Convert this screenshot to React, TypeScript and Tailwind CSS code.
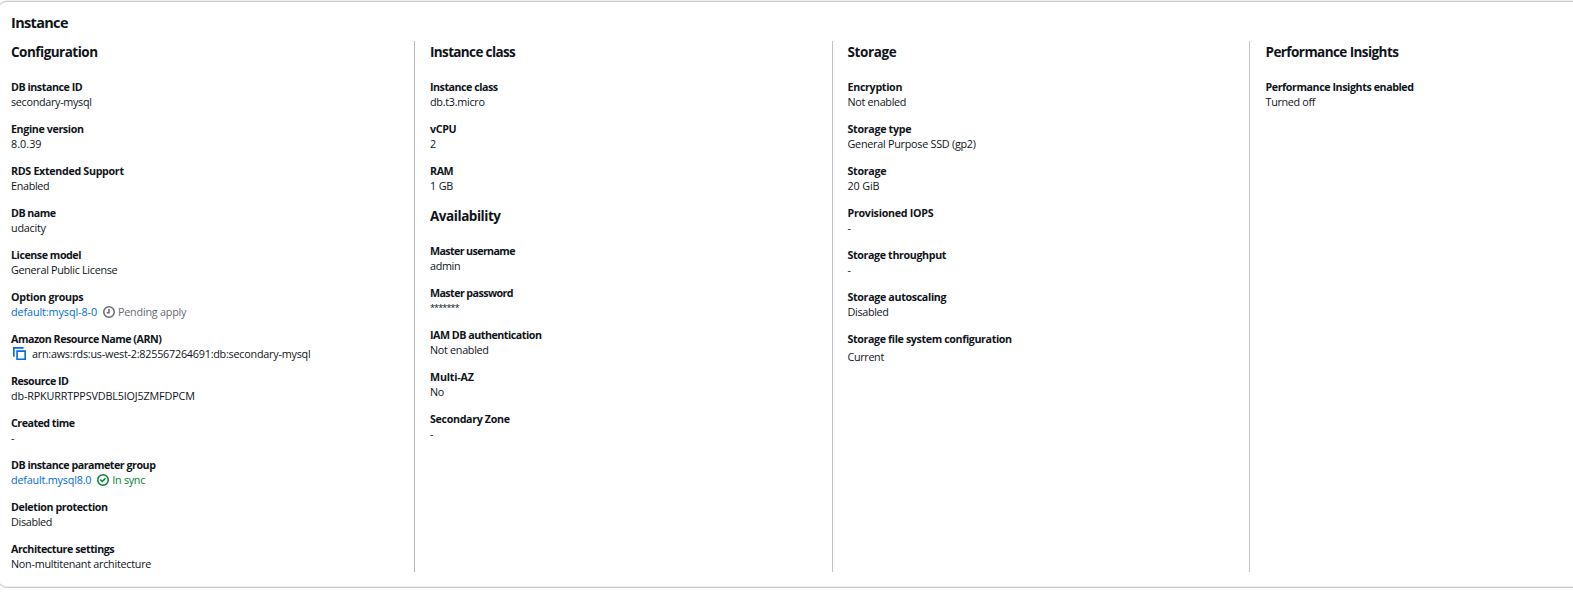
import type { ReactNode } from "react";

type FieldProps = { label: string; labelClass?: string; valueClass?: string; children: ReactNode };

function Field({ label, labelClass = "", valueClass = "", children }: FieldProps) {
  return (
    <div>
      <dt className={`h-[15px] text-[10.7px] leading-[17px] font-bold whitespace-nowrap text-[#0f141a] ${labelClass}`}>{label}</dt>
      <dd className={`flex h-[15px] items-center text-[10.8px] leading-[15px] whitespace-nowrap text-[#0f141a] ${valueClass}`}>
        {children}
      </dd>
    </div>
  );
}

function Group({ title, titleClass, children }: { title: string; titleClass: string; children: ReactNode }) {
  return (
    <section>
      <h3 className={`mb-[18px] h-[18px] text-[13.5px] leading-[18px] font-bold whitespace-nowrap text-[#0f141a] ${titleClass}`}>{title}</h3>
      <dl className="flex flex-col gap-3">{children}</dl>
    </section>
  );
}

function PendingIcon() {
  return (
    <svg viewBox="0 0 16 16" className="mr-[3px] ml-[6px] size-3 shrink-0" fill="none" stroke="#656871" strokeWidth="2">
      <circle cx="8" cy="8" r="7" />
      <path d="M8 4v5H5" />
    </svg>
  );
}

function SuccessIcon() {
  return (
    <svg viewBox="0 0 16 16" className="mr-[3px] ml-[6px] size-3 shrink-0" fill="none" stroke="#00802f" strokeWidth="2">
      <circle cx="8" cy="8" r="7" />
      <path d="m5 8 2 2 3.521-3.521" strokeLinecap="square" />
    </svg>
  );
}

function CopyIcon() {
  return (
    <svg viewBox="0 0 16 16" className="mr-[6px] ml-[2px] size-[13px] shrink-0" fill="none" stroke="#006ce0" strokeWidth="2">
      <path d="M15 5H5v10h10V5Z" />
      <path d="M13 1H1v11" />
    </svg>
  );
}

export default function App() {
  return (
    <div className="h-[615px] w-full overflow-hidden bg-white font-['Open_Sans',sans-serif]">
      <div className="mt-px -mr-4 -ml-[3px] h-[587px] rounded-[10px] border border-[#c9cacf] bg-white pt-[12px] pl-[13px] shadow-[0_-1px_0_#eeeeee,inset_0_-1px_0_#eeeeee]">
        <h2 className="h-[18px] text-[14.5px] leading-[18px] font-bold tracking-[-0.67px] text-[#0f141a]">Instance</h2>
        <div className="mt-[9px] flex h-[531px]">
          <div className="w-[403px] shrink-0 pt-[2px]">
            <Group title="Configuration" titleClass="tracking-[-0.51px]">
              <Field label="DB instance ID" labelClass="tracking-[-0.46px]" valueClass="tracking-[-0.31px]">secondary-mysql</Field>
              <Field label="Engine version" labelClass="tracking-[-0.38px]" valueClass="tracking-[0.03px]">8.0.39</Field>
              <Field label="RDS Extended Support" labelClass="tracking-[-0.31px]" valueClass="tracking-[-0.32px]">Enabled</Field>
              <Field label="DB name" labelClass="tracking-[-0.53px]" valueClass="tracking-[-0.23px]">udacity</Field>
              <Field label="License model" labelClass="tracking-[-0.46px]" valueClass="tracking-[-0.31px]">General Public License</Field>
              <Field label="Option groups" labelClass="tracking-[-0.31px]">
                <a className="tracking-[-0.09px] text-[#006ce0]">default:mysql-8-0</a>
                <PendingIcon />
                <span className="tracking-[-0.22px] text-[#656871]">Pending apply</span>
              </Field>
              <Field label="Amazon Resource Name (ARN)" labelClass="tracking-[-0.48px]">
                <CopyIcon />
                <span className="tracking-[-0.23px]">arn:aws:rds:us-west-2:825567264691:db:secondary-mysql</span>
              </Field>
              <Field label="Resource ID" labelClass="tracking-[-0.52px]" valueClass="tracking-[-0.16px]">db-RPKURRTPPSVDBL5IOJ5ZMFDPCM</Field>
              <Field label="Created time" labelClass="tracking-[-0.51px]">-</Field>
              <Field label="DB instance parameter group" labelClass="tracking-[-0.48px]">
                <a className="tracking-[-0.19px] text-[#006ce0]">default.mysql8.0</a>
                <SuccessIcon />
                <span className="tracking-[-0.3px] text-[#00802f]">In sync</span>
              </Field>
              <Field label="Deletion protection" labelClass="tracking-[-0.41px]" valueClass="tracking-[-0.32px]">Disabled</Field>
              <Field label="Architecture settings" labelClass="tracking-[-0.45px]" valueClass="tracking-[-0.26px]">Non-multitenant architecture</Field>
            </Group>
          </div>

          <div className="flex w-[418px] shrink-0 flex-col gap-[14px] border-l border-[#b9bac2] pt-[2px] pl-[15px]">
            <Group title="Instance class" titleClass="tracking-[-0.64px]">
              <Field label="Instance class" labelClass="tracking-[-0.49px]" valueClass="tracking-[-0.27px]">db.t3.micro</Field>
              <Field label="vCPU" labelClass="tracking-[-0.33px]">2</Field>
              <Field label="RAM" labelClass="tracking-[-0.41px]" valueClass="tracking-[-0.17px]">1 GB</Field>
            </Group>
            <Group title="Availability" titleClass="tracking-[-0.45px]">
              <Field label="Master username" labelClass="tracking-[-0.62px]" valueClass="tracking-[-0.36px]">admin</Field>
              <Field label="Master password" labelClass="tracking-[-0.58px]">
                <span className="text-[9px] tracking-[-0.85px]">*******</span>
              </Field>
              <Field label="IAM DB authentication" labelClass="tracking-[-0.48px]" valueClass="tracking-[-0.3px]">Not enabled</Field>
              <Field label="Multi-AZ" labelClass="tracking-[-0.18px]" valueClass="tracking-[-0.5px]">No</Field>
              <Field label="Secondary Zone" labelClass="tracking-[-0.34px]">-</Field>
            </Group>
          </div>

          <div className="w-[417px] shrink-0 border-l border-[#c3c3c6] pt-[2px] pl-[14.5px]">
            <Group title="Storage" titleClass="tracking-[-0.37px]">
              <Field label="Encryption" labelClass="tracking-[-0.31px]" valueClass="tracking-[-0.3px]">Not enabled</Field>
              <Field label="Storage type" labelClass="tracking-[-0.31px]" valueClass="tracking-[-0.26px]">General Purpose SSD (gp2)</Field>
              <Field label="Storage" labelClass="tracking-[-0.3px]" valueClass="tracking-[-0.14px]">20 GiB</Field>
              <Field label="Provisioned IOPS" labelClass="tracking-[-0.28px]">-</Field>
              <Field label="Storage throughput" labelClass="tracking-[-0.37px]">-</Field>
              <Field label="Storage autoscaling" labelClass="tracking-[-0.34px]" valueClass="tracking-[-0.32px]">Disabled</Field>
              <Field label="Storage file system configuration" labelClass="tracking-[-0.38px]" valueClass="mt-[3px] tracking-[-0.34px]">Current</Field>
            </Group>
          </div>

          <div className="flex-1 border-l border-[#c3c3c6] pt-[2px] pl-[15.5px]">
            <Group title="Performance Insights" titleClass="tracking-[-0.57px]">
              <Field label="Performance Insights enabled" labelClass="tracking-[-0.42px]" valueClass="tracking-[-0.32px]">Turned off</Field>
            </Group>
          </div>
        </div>
      </div>
    </div>
  );
}
